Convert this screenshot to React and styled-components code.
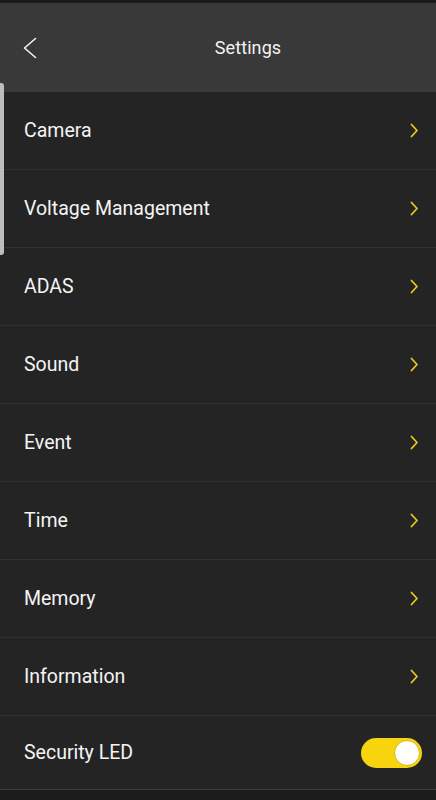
import React, { useState } from 'react';
import styled, { createGlobalStyle } from 'styled-components';

const GlobalStyle = createGlobalStyle`
    html, body {
        margin: 0;
        padding: 0;
        background: #1b1b1b;
    }
    body {
        font-family: Roboto, "Noto Sans", Arial, sans-serif;
        -webkit-font-smoothing: antialiased;
    }
`

const menuItems = [
    'Camera',
    'Voltage Management',
    'ADAS',
    'Sound',
    'Event',
    'Time',
    'Memory',
    'Information',
]

const Screen = styled.div`
    position: relative;
    width: 436px;
    height: 800px;
    overflow: hidden;
    background: #1c1c1c;
    display: flex;
    flex-direction: column;
`

const StatusStrip = styled.div`
    height: 3px;
    background: #181b20;
`

const Header = styled.header`
    height: 89px;
    background: #393939;
    display: grid;
    grid-template-columns: 64px 1fr 4px;
    align-items: center;
`

const BackButton = styled.button`
    background: none;
    border: none;
    padding: 0 0 0 23px;
    height: 40px;
    display: flex;
    align-items: center;
    cursor: pointer;
`

const Title = styled.h1`
    margin: 0;
    text-align: center;
    color: #f2f2f2;
    font-size: 18px;
    font-weight: 400;
    letter-spacing: 0.1px;
`

const List = styled.ul`
    list-style: none;
    margin: 0;
    padding: 0;
    background: #242424;
`

const Row = styled.li`
    height: ${p => (p.$last ? '73px' : '77px')};
    padding: 0 14px 0 24px;
    display: flex;
    align-items: center;
    justify-content: space-between;
    border-bottom: 1px solid ${p => (p.$last ? '#3a3a3a' : '#313131')};
`

const Label = styled.span`
    color: #f4f4f4;
    font-size: 19.5px;
    font-weight: 400;
`

const Chevron = styled.span`
    width: 16px;
    display: flex;
    justify-content: center;
`

const Toggle = styled.button`
    position: relative;
    width: 61px;
    height: 30px;
    border-radius: 15px;
    border: none;
    padding: 0;
    background: ${p => (p.$on ? '#f8d40f' : '#555')};
    cursor: pointer;
`

const Knob = styled.span`
    position: absolute;
    top: 2px;
    left: ${p => (p.$on ? '33px' : '2px')};
    width: 24px;
    height: 24px;
    border-radius: 50%;
    background: #fff;
    border: 1px solid #d9b80a;
`

const ScrollThumb = styled.div`
    position: absolute;
    left: 0;
    top: 83px;
    width: 4px;
    height: 172px;
    background: #bdbdbd;
    border-radius: 0 3px 3px 0;
`

function BackIcon() {
    return (
        <svg width="14" height="22" viewBox="0 0 14 22">
            <path d="M12.5 1.5 L1.5 11 L12.5 20.5" fill="none" stroke="#f4f4f4" strokeWidth="1.6" strokeLinecap="round" strokeLinejoin="round" />
        </svg>
    );
}

function ArrowIcon() {
    return (
        <svg width="9" height="15" viewBox="0 0 9 15">
            <path d="M1.5 1.5 L7 7.5 L1.5 13.5" fill="none" stroke="#ecc81a" strokeWidth="1.8" strokeLinecap="round" strokeLinejoin="round" />
        </svg>
    );
}

function App() {
    const [ledOn, setLedOn] = useState(true);

    return (
        <Screen>
            <GlobalStyle />
            <StatusStrip />
            <Header>
                <BackButton aria-label="Back">
                    <BackIcon />
                </BackButton>
                <Title>Settings</Title>
                <span />
            </Header>
            <List>
                {menuItems.map(item => (
                    <Row key={item}>
                        <Label>{item}</Label>
                        <Chevron><ArrowIcon /></Chevron>
                    </Row>
                ))}
                <Row $last>
                    <Label>Security LED</Label>
                    <Toggle $on={ledOn} onClick={() => setLedOn(!ledOn)} aria-label="Security LED">
                        <Knob $on={ledOn} />
                    </Toggle>
                </Row>
            </List>
            <ScrollThumb />
        </Screen>
    );
}

export default App;
